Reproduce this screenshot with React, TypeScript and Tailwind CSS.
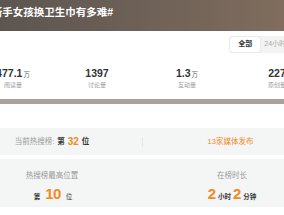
const font = { fontFamily: '"Liberation Sans", "Noto Sans CJK SC", sans-serif' };

const stats = [
  { value: '477.1', unit: '万', label: '阅读量' },
  { value: '1397', unit: '', label: '讨论量' },
  { value: '1.3', unit: '万', label: '互动量' },
  { value: '227', unit: '', label: '原创量' },
];

export default function App() {
  return (
    <div className="w-[284px] h-[215px] overflow-hidden bg-white" style={font}>
      <div className="w-[360px] -ml-[38px]">
        <div className="h-[31px] bg-gradient-to-r from-[#57524f] to-[#85705f] flex items-start pt-[6px] pl-[24px]">
          <span className="text-[10.5px] leading-[12px] font-bold text-white">#断手女孩换卫生巾有多难#</span>
        </div>

        <div className="h-[22px] flex justify-end items-end pr-[12px]">
          <div className="flex items-center bg-[#f3f3f3] rounded-[3px] p-[1px] h-[17px]">
            <span className="h-[15px] w-[30px] bg-white rounded-[3px] shadow-[0_0_2px_rgba(0,0,0,0.12)] flex items-center justify-center text-[7px] font-bold text-[#333]">全部</span>
            <span className="px-[4px] text-[7px] text-[#aaa]">24小时</span>
            <span className="px-[4px] text-[7px] text-[#aaa]">7天</span>
          </div>
        </div>

        <div className="flex mt-[14px] h-[32px]">
          {stats.map((s, i) => (
            <div key={s.label} className={`w-[90px] flex flex-col items-center ${i === 0 ? 'pl-[12px]' : ''}`}>
              <div className="flex items-baseline h-[12px] leading-[12px]">
                <span className="text-[10.5px] font-bold text-[#333]">{s.value}</span>
                {s.unit && <span className="text-[6.5px] text-[#666] ml-[1px]">{s.unit}</span>}
              </div>
              <span className="text-[6px] leading-[8px] text-[#999] mt-[2px]">{s.label}</span>
            </div>
          ))}
        </div>

        <div className="h-[5px] bg-[#a8a29d]" />

        <div className="h-[24px]" />

        <div className="h-[27px] bg-[#f4f5f5] flex items-center">
          <div className="w-[180px] flex items-center justify-center text-[7.5px]">
            <span className="text-[#999]">当前热搜榜:</span>
            <span className="ml-[3px] font-bold text-[#333]">第</span>
            <span className="mx-[3px] text-[10px] font-bold text-[#f08a24]">32</span>
            <span className="font-bold text-[#333]">位</span>
          </div>
          <div className="w-px h-[10px] bg-[#e6e6e6]" />
          <div className="flex-1 flex justify-center text-[7.5px] text-[#f08a24] pr-[4px]">13家媒体发布</div>
        </div>

        <div className="h-[48px] bg-[#f4f5f5] mt-[4px] flex">
          <div className="w-[180px] flex flex-col items-center pt-[12px]">
            <span className="text-[7.5px] leading-[10px] text-[#999]">热搜榜最高位置</span>
            <div className="flex items-baseline mt-[5px] pl-[2px]">
              <span className="text-[6.5px] font-bold text-[#333]">第</span>
              <span className="mx-[5px] text-[15px] leading-[15px] font-bold text-[#f08a24] tracking-[-0.5px]">10</span>
              <span className="text-[6.5px] text-[#333]">位</span>
            </div>
          </div>
          <div className="flex-1 flex flex-col items-center pt-[12px]">
            <span className="text-[7.5px] leading-[10px] text-[#999]">在榜时长</span>
            <div className="flex items-baseline mt-[5px]">
              <span className="text-[15px] leading-[15px] font-bold text-[#f08a24]">2</span>
              <span className="mx-[2px] text-[6.5px] font-bold text-[#333]">小时</span>
              <span className="text-[15px] leading-[15px] font-bold text-[#f08a24]">2</span>
              <span className="ml-[2px] text-[6.5px] font-bold text-[#333]">分钟</span>
            </div>
          </div>
        </div>
      </div>
    </div>
  );
}
